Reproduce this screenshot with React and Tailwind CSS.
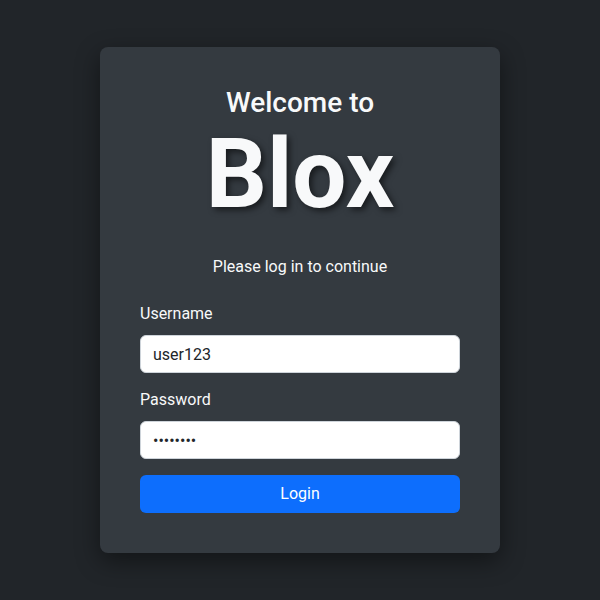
import React from "react";

const App = () => {
  return (
    <div
      className="min-h-[600px] w-full bg-[#212529] flex justify-center pt-[47px]"
      style={{ fontFamily: "Roboto, 'Liberation Sans', sans-serif" }}
    >
      <div className="w-[400px] h-[506px] bg-[#343a40] rounded-lg shadow-[0_8px_24px_rgba(0,0,0,0.45)] px-10 pt-10 pb-10 flex flex-col">
        <div className="text-center">
          <h3 className="pt-[2px] text-[28px] leading-none font-medium text-[#f8f9fa]">
            Welcome to
          </h3>
          <h1 className="text-[96px] leading-[1.2] font-bold text-[#f8f9fa] [text-shadow:3px_3px_6px_rgba(0,0,0,0.55)]">
            Blox
          </h1>
          <p className="mt-[23px] text-base leading-6 text-[#f8f9fa]">
            Please log in to continue
          </p>
        </div>

        <form className="mt-[23px] flex flex-col" onSubmit={(e) => e.preventDefault()}>
          <label className="text-base leading-6 text-[#f8f9fa] mb-[9px]">Username</label>
          <input
            type="text"
            defaultValue="user123"
            className="h-[38px] w-full rounded-md border border-[#ced4da] bg-white px-3 text-base text-[#212529] outline-none"
          />
          <label className="mt-[15px] text-base leading-6 text-[#f8f9fa] mb-[9px]">Password</label>
          <input
            type="password"
            defaultValue="password"
            className="h-[38px] w-full rounded-md border border-[#ced4da] bg-white px-3 text-base text-[#212529] outline-none"
          />
          <button
            type="submit"
            className="mt-4 h-[38px] w-full rounded-md bg-[#0d6efd] text-base text-white"
          >
            Login
          </button>
        </form>
      </div>
    </div>
  );
};

export default App;
